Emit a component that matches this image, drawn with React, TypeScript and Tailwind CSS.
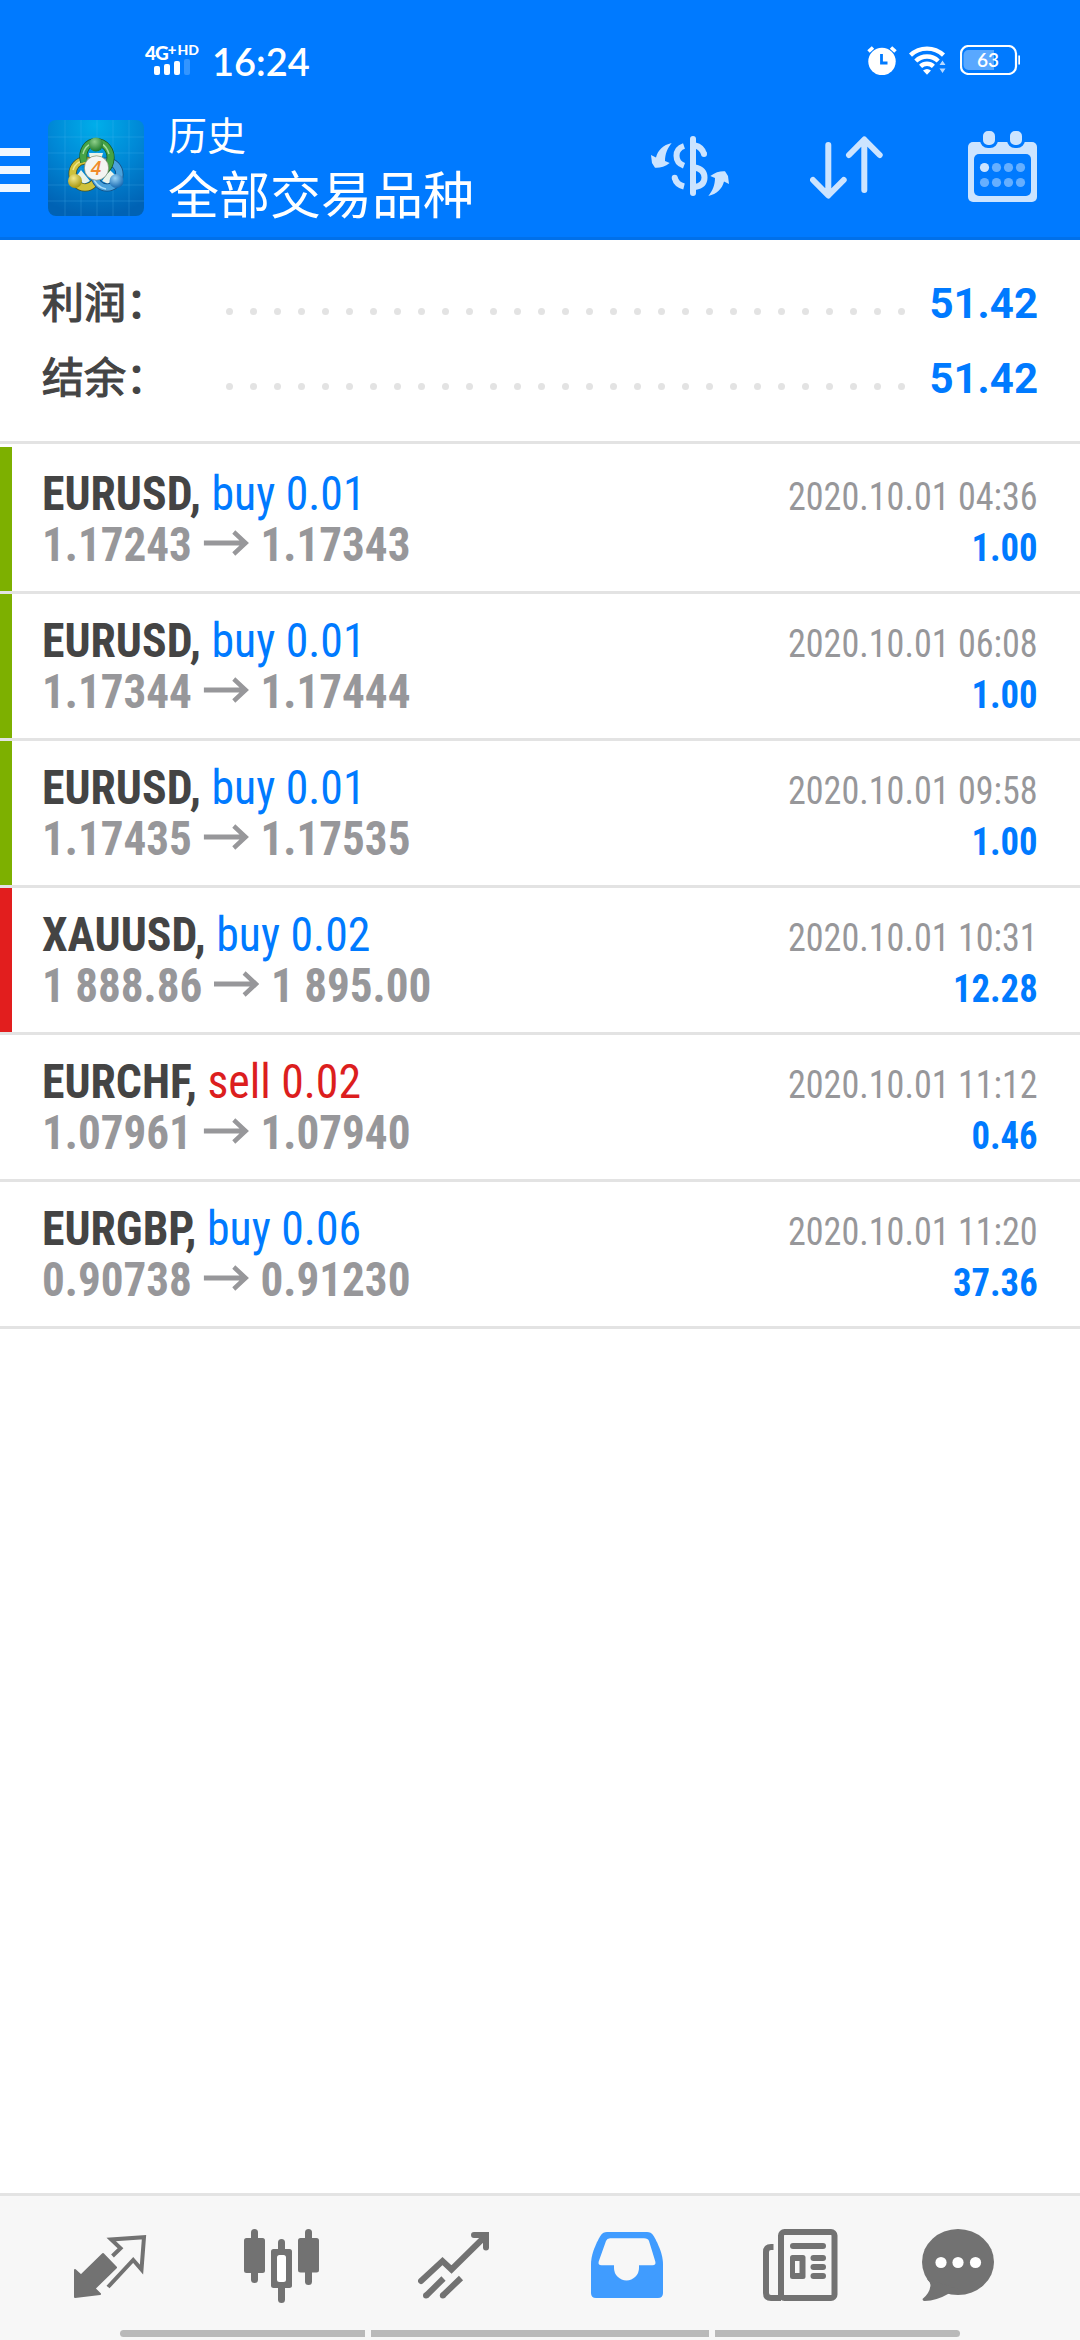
import type { ReactNode } from 'react';

type Deal = {
  symbol: string;
  side: 'buy' | 'sell';
  volume: string;
  open: string;
  close: string;
  time: string;
  profit: string;
  mark?: 'green' | 'red';
};

const deals: Deal[] = [
  { symbol: 'EURUSD', side: 'buy', volume: '0.01', open: '1.17243', close: '1.17343', time: '2020.10.01 04:36', profit: '1.00', mark: 'green' },
  { symbol: 'EURUSD', side: 'buy', volume: '0.01', open: '1.17344', close: '1.17444', time: '2020.10.01 06:08', profit: '1.00', mark: 'green' },
  { symbol: 'EURUSD', side: 'buy', volume: '0.01', open: '1.17435', close: '1.17535', time: '2020.10.01 09:58', profit: '1.00', mark: 'green' },
  { symbol: 'XAUUSD', side: 'buy', volume: '0.02', open: '1 888.86', close: '1 895.00', time: '2020.10.01 10:31', profit: '12.28', mark: 'red' },
  { symbol: 'EURCHF', side: 'sell', volume: '0.02', open: '1.07961', close: '1.07940', time: '2020.10.01 11:12', profit: '0.46' },
  { symbol: 'EURGBP', side: 'buy', volume: '0.06', open: '0.90738', close: '0.91230', time: '2020.10.01 11:20', profit: '37.36' },
];

function StatusBar() {
  return (
    <div className="flex h-[99px] justify-between pl-[145px] pr-[60px] text-white">
      <div className="flex">
        <div className="w-[56px] pt-[44px]">
          <div className="flex items-start font-['Lato'] font-black leading-none">
            <span className="text-[19px] leading-[17px] tracking-[-1px]">4G</span>
            <span className="text-[15px] leading-[10px]">+</span>
            <span className="ml-px text-[14px] leading-[12px]">HD</span>
          </div>
          <div className="ml-[9px] flex h-[14px] items-end gap-[4px]">
            <span className="h-[9px] w-[6px] rounded-[2px] bg-white" />
            <span className="h-[11px] w-[6px] rounded-[2px] bg-white" />
            <span className="h-[14px] w-[6px] rounded-[2px] bg-white" />
            <span className="h-[16px] w-[6px] rounded-[2px] bg-[#3395ff]" />
          </div>
        </div>
        <span className="ml-[11px] mt-[41px] font-['Lato'] text-[38px] font-semibold leading-[40px]">16:24</span>
      </div>
      <div className="flex pt-[45px]">
        <svg width="30" height="30" viewBox="0 0 30 30" className="mr-[12px]">
          <circle cx="15" cy="16.5" r="13.7" fill="#fff" />
          <path d="M1.5 6.5 6 2.5M28.5 6.5 24 2.5" stroke="#fff" strokeWidth="3.6" />
          <path d="M14.5 9v9h6" fill="none" stroke="#007aff" strokeWidth="2.8" />
        </svg>
        <svg width="38" height="30" viewBox="0 0 38 30" className="mr-[13px]">
          <g fill="none" stroke="#fff" strokeWidth="4.4">
            <path d="M1.5 10.2a24 24 0 0 1 33 0" />
            <path d="M6.8 16a16.2 16.2 0 0 1 22.4 0" />
            <path d="M11.6 21.4a9.2 9.2 0 0 1 12.8 0" />
          </g>
          <path d="M14 25.5q4-3 8 0l-4 4.2z" fill="#fff" />
          <path d="m33.5 14.5 4 6h-8zM33.5 29l4-6h-8z" fill="#b8d9ff" stroke="#007aff" strokeWidth="1.2" />
        </svg>
        <svg width="60" height="30" viewBox="0 0 60 30">
          <rect x="1" y="1" width="55" height="28" rx="7.5" fill="none" stroke="#fff" strokeWidth="2.2" />
          <path d="M34 5H8.500a5 5 0 0 0-5 5v10a5 5 0 0 0 5 5H34z" fill="#59a8ff" />
          <path d="M59.200 10.500v9" stroke="#fff" strokeWidth="1.8" />
          <text x="28" y="21.800" textAnchor="middle" fill="#fff" fontFamily="Lato" fontWeight="600" fontSize="19">63</text>
        </svg>
      </div>
    </div>
  );
}

function AppLogo() {
  return (
    <svg width="96" height="96" viewBox="0 0 96 96" className="rounded-[8px]">
      <defs>
        <radialGradient id="bg" cx="0.5" cy="0.05" r="0.95">
          <stop offset="0" stopColor="#00aeea" />
          <stop offset="0.5" stopColor="#0088d6" />
          <stop offset="1" stopColor="#0062b4" />
        </radialGradient>
        <radialGradient id="green" cx="0.4" cy="0.3" r="0.7">
          <stop offset="0" stopColor="#8fd08a" />
          <stop offset="1" stopColor="#1d7a2a" />
        </radialGradient>
        <radialGradient id="yellow" cx="0.4" cy="0.3" r="0.7">
          <stop offset="0" stopColor="#f3e98a" />
          <stop offset="1" stopColor="#a8960f" />
        </radialGradient>
        <radialGradient id="blue" cx="0.4" cy="0.3" r="0.7">
          <stop offset="0" stopColor="#9ad4f7" />
          <stop offset="1" stopColor="#1668b0" />
        </radialGradient>
      </defs>
      <rect width="96" height="96" fill="url(#bg)" />
      <path
        d="M0 17h96M0 33h96M0 49h96M0 65h96M0 81h96M17 0v96M33 0v96M49 0v96M65 0v96M81 0v96"
        stroke="#5cc4f5"
        strokeOpacity="0.22"
      />
      <path d="M41 33h14l-2 7H42zM28 57l5-7 9 11-6 3zM68 56l-6-6-8 11 6 3z" fill="#e9f3ea" />
      <g fill="none">
        <ellipse cx="37" cy="54" rx="12.500" ry="13.500" stroke="#4f5216" strokeWidth="8" />
        <ellipse cx="37" cy="54" rx="12.500" ry="13.500" stroke="#cfc23c" strokeWidth="6.500" />
        <path d="M25 50q3-9 11-9" stroke="#efe68a" strokeWidth="1.500" />
        <ellipse cx="59" cy="54.500" rx="12.500" ry="13" stroke="#154d80" strokeWidth="8" />
        <ellipse cx="59" cy="54.500" rx="12.500" ry="13" stroke="#4aa2dc" strokeWidth="6.500" />
        <path d="M45 57q3 10 13 12" stroke="#a8dcf8" strokeWidth="1.500" />
        <path d="M36 42c-3-12 4-20 12-20s17 8 14 20c-1 4-3 7-6 9" stroke="#1b5a22" strokeWidth="8" />
        <path d="M36 42c-3-12 4-20 12-20s17 8 14 20c-1 4-3 7-6 9" stroke="#45a346" strokeWidth="6.500" />
        <path d="M35 34q2-8 8-10M61 34q-2-7-7-10" stroke="#a5dc9c" strokeWidth="1.500" />
      </g>
      <circle cx="48" cy="24.500" r="7" fill="url(#green)" />
      <circle cx="27" cy="61" r="7" fill="url(#yellow)" />
      <circle cx="68.500" cy="61" r="7" fill="url(#blue)" />
      <circle cx="48.500" cy="48" r="12.200" fill="#f4f4f2" stroke="#6c7a58" strokeWidth="0.600" />
      <text x="48" y="55" textAnchor="middle" fontFamily="Open Sans" fontStyle="italic" fontWeight="600" fontSize="19" fill="#f08a2c">4</text>
    </svg>
  );
}

function Header() {
  return (
    <header className="h-[240px] border-b-[3px] border-[#0070ea] bg-[#007aff]">
      <StatusBar />
      <div className="flex h-[138px] items-center">
        <div className="mt-1 flex w-[30px] flex-col gap-[10px]">
          <span className="h-2 bg-[#f0f7ff]" />
          <span className="h-2 bg-[#f0f7ff]" />
          <span className="h-2 bg-[#f0f7ff]" />
        </div>
        <div className="ml-[18px]"><AppLogo /></div>
        <div className="-mt-[5px] ml-[24px] flex-1 font-['Noto_Sans_CJK_SC',sans-serif] text-white">
          <p className="text-[39px] leading-[53px]">历史</p>
          <p className="text-[51px] leading-[65px]">全部交易品种</p>
        </div>
        <svg width="78" height="60" viewBox="0 0 78 60" className="-mt-1 mr-[81px]">
          <g fill="none" stroke="#cce4ff" strokeWidth="6">
            <path d="M42 3v54" strokeLinecap="round" />
            <path d="M33 10q-7.500 2.500-7.500 9.800T33 29.800" />
            <path d="M23.800 42q1.500 6.500 9.200 8.500" />
            <path d="M44 9.500q7 1.500 9 8.500" />
            <path d="M44 31.500q9.500 2 9.500 10T44 51" />
          </g>
          <circle cx="23.700" cy="41.800" r="3" fill="#cce4ff" />
          <circle cx="53" cy="18" r="3" fill="#cce4ff" />
          <g fill="#cce4ff">
            <path d="M20.700 7C12 9 7 14 5 21.500L0 19l1 8 3 4.800c4 .4 10-.8 14.700-4.800L14 25c0-7 2.500-13 6.700-18z" />
            <path transform="rotate(180 39 33.500)" d="M20.700 7C12 9 7 14 5 21.500L0 19l1 8 3 4.800c4 .4 10-.8 14.700-4.800L14 25c0-7 2.500-13 6.700-18z" />
          </g>
        </svg>
        <svg width="73" height="63" viewBox="0 0 73 63" className="-mt-px mr-[85px]">
          <g fill="none" stroke="#cce4ff" strokeWidth="6" strokeLinecap="round" strokeLinejoin="round">
            <path d="M18.300 9v50M3 44l15.300 15.500L33.700 44" />
            <path d="M54.300 54V4M39 19 54.300 3.500 69.700 19" />
          </g>
        </svg>
        <svg width="69" height="72" viewBox="0 0 69 72" className="-mt-0.5 mr-[43px]">
          <rect y="11" width="69" height="60" rx="5" fill="#cce4ff" />
          <rect x="6" y="23" width="57" height="42" rx="5" fill="#007aff" />
          <g fill="#cce4ff" stroke="#007aff" strokeWidth="3">
            <rect x="13.500" y="-1.500" width="15" height="17" rx="6.500" />
            <rect x="40.500" y="-1.500" width="15" height="17" rx="6.500" />
          </g>
          <circle cx="16.500" cy="36.500" r="4.600" fill="#cce4ff" />
          <g fill="#66afff">
            <circle cx="28.500" cy="36.500" r="4.600" />
            <circle cx="40.500" cy="36.500" r="4.600" />
            <circle cx="52.500" cy="36.500" r="4.600" />
            <circle cx="16.500" cy="51.500" r="4.600" />
            <circle cx="28.500" cy="51.500" r="4.600" />
            <circle cx="40.500" cy="51.500" r="4.600" />
            <circle cx="52.500" cy="51.500" r="4.600" />
          </g>
        </svg>
      </div>
    </header>
  );
}

function SummaryRow({ label, value }: { label: string; value: string }) {
  return (
    <div className="flex h-[75px] items-start pl-[42px] pr-[42px]">
      <span className="-mt-[5px] w-[184px] font-['Noto_Sans_CJK_SC',sans-serif] text-[42px] leading-[75px] text-[#444] [-webkit-text-stroke:1.2px_#444]">{label}</span>
      <div className="mt-[41px] flex flex-1 gap-[17px]">
        {Array.from({ length: 29 }, (_, i) => (
          <span key={i} className="size-[7px] shrink-0 rounded-full bg-[#e3e3e3]" />
        ))}
      </div>
      <span className="-mt-px text-[42px] font-bold leading-[75px] text-[#007aff]">{value}</span>
    </div>
  );
}

function DealRow({ deal }: { deal: Deal }) {
  const mark = deal.mark === 'green' ? 'bg-[#7db000]' : deal.mark === 'red' ? 'bg-[#e21e1e]' : 'bg-white';

  return (
    <li className="flex h-[147px] border-b-[3px] border-[#e3e3e3] font-[430] font-stretch-condensed">
      <span className={`w-[12px] ${mark}`} />
      <div className="flex-1 pl-[30px] pt-[21px] text-[48px] leading-[51px]">
        <p className="origin-left scale-x-[0.953]">
          <span className="font-bold text-[#444]">{deal.symbol},</span>{' '}
          <span className={deal.side === 'buy' ? 'text-[#007aff]' : 'text-[#dc1e1e]'}>{deal.side} {deal.volume}</span>
        </p>
        <p className="flex origin-left scale-x-[0.94] items-center font-bold text-[#97979a]">
          {deal.open}
          <svg width="49" height="26" viewBox="0 0 49 26" className="-mt-[3px] mx-[12px]" fill="none" stroke="#97979a" strokeWidth="4.8">
            <path d="M0 13h44M32 2l12.500 11L32 24" />
          </svg>
          {deal.close}
        </p>
      </div>
      <div className="pr-[42px] pt-[25px] text-right text-[39px] leading-[51px]">
        <p className="origin-right scale-x-[0.926] text-[#97979a]">{deal.time}</p>
        <p className="origin-right scale-x-[0.94] font-bold text-[#007aff]">{deal.profit}</p>
      </div>
    </li>
  );
}

function Tab({ width, height, className, children }: { width: number; height: number; className: string; children: ReactNode }) {
  return (
    <svg width={width} height={height} viewBox={`0 0 ${width} ${height}`} className={className} fill="#727272">
      {children}
    </svg>
  );
}

function Footer() {
  return (
    <footer className="flex h-[147px] flex-col border-t-[3px] border-[#e3e3e3] bg-[#f7f7f7]">
      <div className="flex h-[134px] items-start pl-[74px]">
        <Tab width={73} height={64} className="mt-[39px]">
          <path d="m1 35 6 5.500L29 19l13 13.500-21.500 21L26 59 1 62z" stroke="#727272" strokeWidth="2" strokeLinejoin="round" />
          <path d="m38.500 21 8-7.700-9.300-8.800L70 2.200l-2.500 32.300-8.300-9.500L34 52" fill="none" stroke="#727272" strokeWidth="4" />
        </Tab>
        <Tab width={75} height={74} className="ml-[97px] mt-[33px]">
          <rect x="7" width="7" height="54" rx="3.500" />
          <rect y="9" width="21" height="35" rx="2.500" />
          <rect x="34" y="10" width="7" height="64" rx="3.500" />
          <rect x="27" y="20" width="21" height="39" rx="2.500" />
          <rect x="33" y="26" width="9" height="27" rx="2.500" fill="#fff" />
          <rect x="61" width="7" height="56" rx="3.500" />
          <rect x="54" y="9" width="21" height="34.500" rx="2.500" />
        </Tab>
        <Tab width={71} height={67} className="ml-[99px] mt-[36px]">
          <g fill="none" stroke="#727272" strokeWidth="6">
            <path d="M3 49 24.500 29l9 8.500L67 4.500M56 3h12v12.500" strokeLinecap="round" />
            <path d="m8.300 63.500 17.200-17M24.800 63.500 43 46" />
          </g>
          <circle cx="8" cy="63.500" r="3" />
          <circle cx="24.800" cy="63.500" r="3" />
        </Tab>
        <Tab width={72} height={66} className="ml-[102px] mt-[36px]">
          <path
            d="M0 32C0 20 8 6 10 3Q12 0 16 0h40q4 0 6 3c2 3 10 17 10 29v29q0 5-5 5H5q-5 0-5-5z"
            fill="#409cff"
          />
          <path
            d="M19 6.300h34q4 0 5 2.700l6.300 20.500q1 3.800-2.800 3.800H48V36a12.500 12.500 0 0 1-25 0v-2.700H10.500q-3.800 0-2.800-3.800L15 9q1-2.700 4-2.700z"
            fill="#f7f7f7"
          />
        </Tab>
        <Tab width={75} height={72} className="ml-[100px] mt-[33px]">
          <rect x="18" y="3" width="53.500" height="66" rx="3.500" fill="none" stroke="#727272" strokeWidth="6" />
          <path d="M10.500 18H8q-5 0-5 5v41q0 5 5 5h10" fill="none" stroke="#727272" strokeWidth="6" />
          <rect x="27" y="14" width="36" height="6" rx="3" />
          <rect x="27" y="26" width="15.500" height="24" rx="2.500" />
          <rect x="32" y="32" width="4.500" height="12" fill="#f7f7f7" />
          <rect x="47.500" y="26" width="15.500" height="6" rx="3" />
          <rect x="47.500" y="35" width="15.500" height="6" rx="3" />
          <rect x="47.500" y="44" width="15.500" height="6" rx="3" />
        </Tab>
        <Tab width={72} height={72} className="ml-[84px] mt-[33px]">
          <ellipse cx="36" cy="33" rx="36" ry="33" />
          <path d="M5 50q3.500 3 3.500 6Q8 64 .5 70q0 2 2 2Q15 71.500 26 65l10-5z" />
          <g fill="#fff">
            <circle cx="19" cy="33.500" r="5.600" />
            <circle cx="36" cy="33.500" r="5.600" />
            <circle cx="53.500" cy="33.500" r="5.600" />
          </g>
        </Tab>
      </div>
      <div className="flex justify-center gap-[6px]">
        <span className="h-[7px] w-[245px] rounded-l-full bg-[#b9b9b9]" />
        <span className="h-[7px] w-[338px] bg-[#b9b9b9]" />
        <span className="h-[7px] w-[245px] rounded-r-full bg-[#b9b9b9]" />
      </div>
    </footer>
  );
}

export default function App() {
  return (
    <div className="flex h-[2340px] w-[1080px] flex-col bg-white font-['Roboto',sans-serif]">
      <Header />
      <section className="border-b-[3px] border-[#e3e3e3] pb-[24px] pt-[27px]">
        <SummaryRow label="利润：" value="51.42" />
        <SummaryRow label="结余：" value="51.42" />
      </section>
      <ul className="flex-1 pt-[3px]">
        {deals.map((deal) => (
          <DealRow key={deal.time} deal={deal} />
        ))}
      </ul>
      <Footer />
    </div>
  );
}
